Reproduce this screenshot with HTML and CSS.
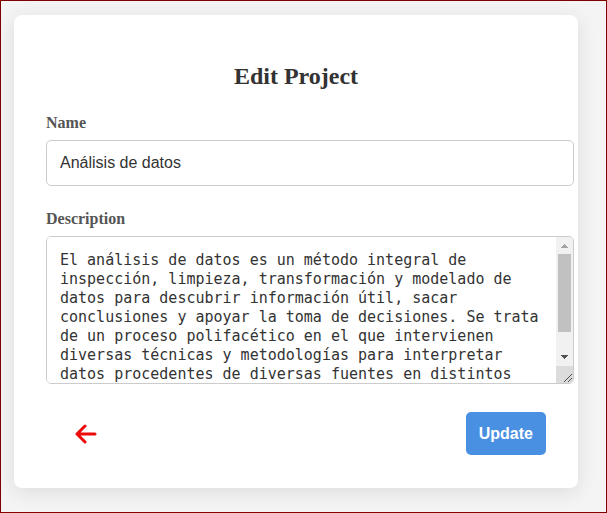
FILE: index.html
```html
<!DOCTYPE html>
<html lang="en">
<head>
  <meta charset="utf-8">
  <meta name="viewport" content="width=device-width, initial-scale=1">
  <title>Edit Project</title>
  <link rel="stylesheet" href="styles.css">
</head>
<body>
  <main class="page">
    <form class="card">
      <h1 class="card-title">Edit Project</h1>
      <div class="field">
        <label class="label" for="name">Name</label>
        <input class="control" id="name" name="name" type="text" value="Análisis de datos">
      </div>
      <div class="field">
        <label class="label" for="description">Description</label>
        <div class="area">
          <textarea class="area-text" id="description" name="description" spellcheck="false">El análisis de datos es un método integral de inspección, limpieza, transformación y modelado de datos para descubrir información útil, sacar conclusiones y apoyar la toma de decisiones. Se trata de un proceso polifacético en el que intervienen diversas técnicas y metodologías para interpretar datos procedentes de diversas fuentes en distintos formatos.</textarea>
          <div class="scrollbar" aria-hidden="true">
            <svg class="scroll-arrow scroll-arrow-up" viewBox="0 0 17 17"><path d="M5 11V10h1V9h1V8h1V7h1v1h1v1h1v1h1v1z"/></svg>
            <div class="scroll-track"><div class="scroll-thumb"></div></div>
            <svg class="scroll-arrow" viewBox="0 0 17 17"><path d="M5 6v1h1v1h1v1h1v1h1V9h1V8h1V7h1V6z"/></svg>
            <svg class="scroll-corner" viewBox="0 0 17 17"><path d="M8 16l8-8M12 16l4-4"/></svg>
          </div>
        </div>
      </div>
      <div class="actions">
        <a class="back" href="#" aria-label="Back">
          <svg class="back-icon" viewBox="0 0 22 20" aria-hidden="true">
            <path d="M10 2 2 10l8 8M2 10h18"/>
          </svg>
        </a>
        <button class="submit" type="submit">Update</button>
      </div>
    </form>
  </main>
</body>
</html>
```

FILE: styles.css
```css
body {
  margin: 0;
  font-family: "Liberation Serif", "Times New Roman", serif;
  color: #333;
}

.page {
  box-sizing: border-box;
  min-height: 100vh;
  padding: 14px 28px 24px 13px;
  border: 1px solid #800000;
  background: #f4f4f4;
}

.card {
  padding: 48px 32px 33px;
  border-radius: 8px;
  background: #fff;
  box-shadow: 0 4px 20px rgba(0, 0, 0, 0.1);
}

.card-title {
  margin: 0 0 24px;
  font-size: 24px;
  line-height: 27px;
  text-align: center;
}

.field {
  margin: 0 -28px 24px 0;
}

.label {
  display: block;
  margin-bottom: 8px;
  font-size: 16px;
  font-weight: bold;
  line-height: 18px;
  color: #555;
}

.control {
  display: block;
  box-sizing: border-box;
  width: 100%;
  height: 46px;
  padding: 13px;
  border: 1px solid #ccc;
  border-radius: 5px;
  outline: none;
  background: #fff;
  color: #333;
  font-family: "Liberation Sans", Arial, sans-serif;
  font-size: 16px;
}

.area {
  display: flex;
  height: 146px;
  overflow: hidden;
  border: 1px solid #ccc;
  border-radius: 5px;
}

.area-text {
  flex: 1;
  min-width: 0;
  padding: 14px 13px 0;
  border: 0;
  outline: none;
  resize: none;
  background: #fff;
  color: #333;
  font-family: "DejaVu Sans Mono", monospace;
  font-size: 15px;
  line-height: 19px;
}

.scrollbar {
  display: flex;
  flex-direction: column;
  width: 17px;
  background: #f1f1f1;
}

.scroll-arrow,
.scroll-corner {
  display: block;
  flex: none;
  width: 17px;
  height: 17px;
}

.scroll-arrow {
  fill: #505050;
}

.scroll-arrow-up {
  fill: #a3a3a3;
}

.scroll-track {
  flex: 1;
  padding: 0 2px;
}

.scroll-thumb {
  height: 82%;
  background: #c1c1c1;
}

.scroll-corner {
  background: #dcdcdc;
  fill: none;
  stroke: #505050;
}

.actions {
  display: flex;
  align-items: center;
  justify-content: space-between;
  margin-top: 28px;
}

.back {
  display: flex;
  padding: 8px 29px;
}

.back-icon {
  width: 22px;
  height: 20px;
  fill: none;
  stroke: #ee0a0a;
  stroke-width: 3;
  stroke-linecap: round;
  stroke-linejoin: round;
}

.submit {
  padding: 12px 13px;
  border: 0;
  border-radius: 5px;
  background: #4a90e2;
  color: #fff;
  font-family: "Liberation Sans", Arial, sans-serif;
  font-size: 16px;
  font-weight: bold;
  line-height: 19px;
}
```
